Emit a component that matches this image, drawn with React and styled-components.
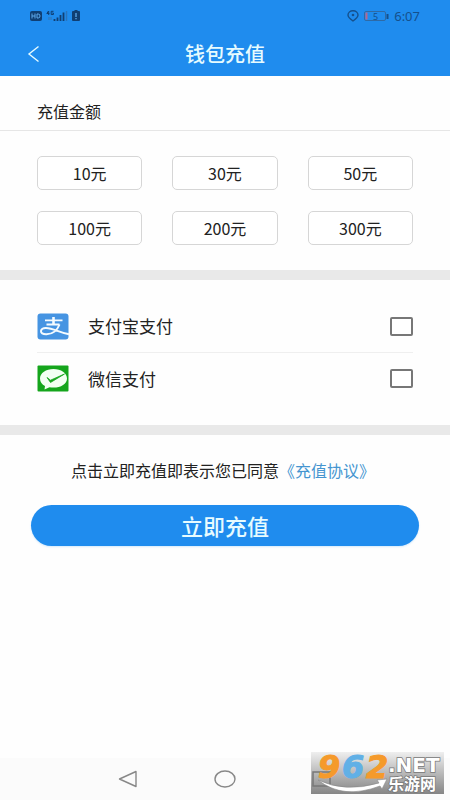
import React from "react";
import styled, { createGlobalStyle } from "styled-components";

const GlobalStyle = createGlobalStyle`
  *, *::before, *::after { box-sizing: border-box; }
  body { margin: 0; background: #fefefe; }
  body, button, input { font-family: "Noto Sans CJK SC", "Noto Sans", sans-serif; }
`;

const Page = styled.div`
  min-height: 100vh;
  display: flex;
  flex-direction: column;
  color: #222;
`;

const Header = styled.header`
  background: #1f8cee;
`;

const StatusBar = styled.div`
  height: 32px;
  padding: 0 30px;
  display: flex;
  align-items: center;
  justify-content: space-between;
  color: #15508c;
`;

const StatusGroup = styled.div`
  display: flex;
  align-items: center;
  gap: ${(p) => p.$gap}px;
`;

const Clock = styled.time`
  font: 13px/16px "Noto Sans", sans-serif;
`;

const TitleBar = styled.div`
  height: 44px;
  padding: 0 24px;
  display: grid;
  grid-template-columns: 24px 1fr 24px;
  align-items: center;
`;

const BackButton = styled.button`
  height: 32px;
  padding: 0;
  border: 0;
  background: none;
  color: #e6fbff;
  display: flex;
  align-items: center;
  cursor: pointer;
`;

const Title = styled.h1`
  margin: 0;
  font-size: 20px;
  line-height: 44px;
  font-weight: 500;
  text-align: center;
  color: #e6fbff;
`;

const SectionTitle = styled.h2`
  margin: 0;
  padding: 16px 37px 0;
  height: 55px;
  border-bottom: 1px solid #e6e6e6;
  font-size: 16px;
  line-height: 38px;
  font-weight: 400;
`;

const AmountGrid = styled.div`
  display: grid;
  grid-template-columns: repeat(3, 1fr);
  gap: 21px 30px;
  padding: 25px 37px;
`;

const AmountButton = styled.button`
  height: 34px;
  padding: 0;
  border: 1px solid #d6d6d6;
  border-radius: 5px;
  background: #fff;
  color: #222;
  font-size: 16px;
  line-height: 32px;
  cursor: pointer;
`;

const Band = styled.div`
  height: 10px;
  background: #e9e9e9;
`;

const PayList = styled.div`
  padding: 20px 37px 21px;
`;

const PayRow = styled.label`
  height: 52px;
  display: flex;
  align-items: center;
  gap: 18px;
  font-size: 17px;
  cursor: pointer;

  & + & { border-top: 1px solid #efefef; }
`;

const PayName = styled.span`
  flex: 1;
  line-height: 24px;
`;

const Tick = styled.input`
  appearance: none;
  width: 23px;
  height: 19px;
  margin: 0;
  border: 2px solid #777;
  border-radius: 2px;
  background: #fff;

  &:checked { background: #1f8cee; }
`;

const Terms = styled.p`
  margin: 0;
  padding: 23px 4px 23px 0;
  font-size: 16px;
  line-height: 24px;
  text-align: center;
`;

const TermsLink = styled.a`
  color: #4595d0;
  text-decoration: none;
`;

const SubmitButton = styled.button`
  height: 41px;
  margin: 0 31px;
  padding: 0;
  border: 0;
  border-radius: 21px;
  background: #1f8cee;
  box-shadow: 0 1px 2px #d3e9fb;
  color: #e6fbff;
  font-size: 22px;
  line-height: 41px;
  font-weight: 500;
  cursor: pointer;
`;

const NavBar = styled.nav`
  position: relative;
  margin-top: auto;
  height: 42px;
  padding: 0 80px;
  display: flex;
  align-items: center;
  justify-content: space-between;
  background: #fbfbfb;
`;

const NavButton = styled.button`
  width: 97px;
  height: 42px;
  padding: 0;
  border: 0;
  background: none;
  display: flex;
  align-items: center;
  justify-content: center;
`;

const Watermark = styled.svg`
  position: absolute;
  right: 6px;
  bottom: 6px;
  overflow: visible;
`;

const SignalIcons = () => (
  <StatusGroup $gap={4}>
    <svg width="12" height="10" viewBox="0 0 12 10" aria-label="HD">
      <rect width="12" height="10" rx="2" fill="#103f73" />
      <path d="M2 2.5v5M5 2.5v5M2 5h3M7 3v4h1.2Q10 7 10 5T8.2 3Z" fill="none" stroke="#5da9ec" />
    </svg>
    <svg width="22" height="12" viewBox="0 0 22 12" aria-label="4G">
      <path d="M2.5 1 .8 3.5h2.6M2.7 1v4M7.5 1.3H5.2v3.2h2.2V3H6.2" fill="none" stroke="#103f73" />
      <path d="M3 7v3M5 7v3" stroke="#3974ae" />
      <path d="M8.5 11V9M11.5 11V7.5M14.5 11V5M17.5 11V2.5" stroke="#103f73" strokeWidth="1.8" />
      <path d="M20.5 11V1" stroke="#2a74bd" strokeWidth="1.5" />
    </svg>
    <svg width="8" height="12" viewBox="0 0 8 12" aria-hidden="true">
      <path d="M2.5 0h3v1H7q1 0 1 1v8q0 1-1 1H1q-1 0-1-1V2q0-1 1-1h1.5z" fill="#103f73" />
      <path d="M4 3v4M4 8v1.3" stroke="#5da9ec" strokeWidth="1.3" />
    </svg>
  </StatusGroup>
);

const BatteryIcons = () => (
  <StatusGroup $gap={5}>
    <svg width="12" height="12" viewBox="0 0 12 12" aria-hidden="true">
      <path d="M6 11Q1 7.5 1 5a5 4.3 0 0 1 10 0Q11 7.5 6 11Z" fill="none" stroke="#15508c" strokeWidth="1.4" />
      <circle cx="6" cy="5" r="1.3" fill="#15508c" />
    </svg>
    <svg width="25" height="12" viewBox="0 0 25 12" aria-label="5%">
      <rect x=".5" y="1.5" width="21" height="9" rx="1.5" fill="none" stroke="#2f6aa5" />
      <rect x="1.5" y="2.5" width="2" height="7" fill="#b5688f" />
      <rect x="22.5" y="4" width="2" height="5" fill="#15508c" />
      <text x="11.5" y="9.5" textAnchor="middle" fontSize="9" fontFamily="Noto Sans" fill="#15508c">5</text>
    </svg>
    <Clock>6:07</Clock>
  </StatusGroup>
);

const AlipayIcon = () => (
  <svg width="33" height="27" viewBox="0 0 33 27" aria-hidden="true">
    <rect x=".5" y=".5" width="31" height="26" rx="3" fill="#4694e2" />
    <g fill="none" stroke="#f5fbff">
      <path d="M16.5 4v7.5" strokeWidth="2.6" />
      <path d="M8 7.3h17.5M9.5 11.5h13" strokeWidth="1.8" />
      <path d="M22.5 11.5C20.5 17 15.5 21 9.5 21.3c-8 .2-6.5-6.5-.5-6.3 7 .2 13 4.3 23 6.3" strokeWidth="2" />
    </g>
  </svg>
);

const WechatPayIcon = () => (
  <svg width="33" height="27" viewBox="0 0 33 27" aria-hidden="true">
    <rect x=".5" y=".5" width="31" height="26" rx="1" fill="#15a51c" />
    <path d="M16.5 4C9 4 3 8 3 13.5c0 3.500 2 6 5 7.500l-.5 3.500 5-2.300c1.200.3 2.500.4 4 .4C24 22.600 30 19 30 13.500S24 4 16.500 4Z" fill="#f3fff3" />
    <path d="m10 12.500 3.500 2.700L27.500 9 13.500 17.500Z" fill="#15a51c" stroke="#15a51c" strokeWidth=".8" strokeLinejoin="round" />
  </svg>
);

const SiteMark = () => (
  <Watermark width="133" height="42" viewBox="0 0 133 42" role="img" aria-label="962.NET 乐游网">
    <defs>
      <linearGradient id="plate" x1="0" y1="0" x2="0" y2="1">
        <stop offset="0" stopColor="#efefef" />
        <stop offset=".5" stopColor="#b9b9b9" />
        <stop offset="1" stopColor="#858585" />
      </linearGradient>
    </defs>
    <rect width="133" height="42" fill="url(#plate)" />
    <rect x="2" y="20" width="17" height="14" fill="none" stroke="#777" strokeWidth="1.5" />
    <g fontFamily="DejaVu Sans" fontWeight="700" fontStyle="italic" fontSize="32">
      <text x="7" y="26" fill="#f59a2b" stroke="#f59a2b">9</text>
      <text x="31" y="26" fill="#61b0e6" stroke="#61b0e6">6</text>
      <text x="55" y="26" fill="#f59a2b" stroke="#f59a2b">2</text>
    </g>
    <path d="M7 28Q34 41 68 31l-2-3 10-1-5 10-2-3Q32 48 7 28Z" fill="#fff" stroke="#888" strokeWidth=".6" />
    <g fill="#fff" stroke="#777" strokeWidth="1.5" paintOrder="stroke">
      <text x="77" y="20" fontFamily="DejaVu Sans" fontWeight="700" fontSize="20">.NET</text>
      <text x="77" y="38" fontFamily="Noto Sans CJK SC" fontWeight="700" fontSize="16">乐游网</text>
    </g>
  </Watermark>
);

const amounts = [10, 30, 50, 100, 200, 300];

const payments = [
  { id: "alipay", name: "支付宝支付", Icon: AlipayIcon },
  { id: "wechat", name: "微信支付", Icon: WechatPayIcon },
];

export default function App() {
  return (
    <Page>
      <GlobalStyle />
      <Header>
        <StatusBar>
          <SignalIcons />
          <BatteryIcons />
        </StatusBar>
        <TitleBar>
          <BackButton aria-label="返回">
            <svg width="20" height="18" viewBox="0 0 20 18" aria-hidden="true">
              <path d="M14.5 1.5 5 9l9.5 7.5" fill="none" stroke="currentColor" strokeWidth="1.4" />
            </svg>
          </BackButton>
          <Title>钱包充值</Title>
        </TitleBar>
      </Header>

      <SectionTitle>充值金额</SectionTitle>
      <AmountGrid>
        {amounts.map((value) => (
          <AmountButton key={value}>{value}元</AmountButton>
        ))}
      </AmountGrid>
      <Band />

      <PayList>
        {payments.map(({ id, name, Icon }) => (
          <PayRow key={id} htmlFor={id}>
            <Icon />
            <PayName>{name}</PayName>
            <Tick type="checkbox" id={id} />
          </PayRow>
        ))}
      </PayList>
      <Band />

      <Terms>
        点击立即充值即表示您已同意<TermsLink href="#terms">《充值协议》</TermsLink>
      </Terms>
      <SubmitButton>立即充值</SubmitButton>

      <NavBar>
        <NavButton aria-label="后退">
          <svg width="20" height="18" viewBox="0 0 20 18" aria-hidden="true">
            <path d="M18 1.5v15L1.5 9Z" fill="none" stroke="#888" strokeWidth="1.4" strokeLinejoin="round" />
          </svg>
        </NavButton>
        <NavButton aria-label="主页">
          <svg width="22" height="18" viewBox="0 0 22 18" aria-hidden="true">
            <ellipse cx="11" cy="9" rx="10" ry="8" fill="none" stroke="#888" strokeWidth="1.4" />
          </svg>
        </NavButton>
        <NavButton aria-label="最近任务" />
        <SiteMark />
      </NavBar>
    </Page>
  );
}
